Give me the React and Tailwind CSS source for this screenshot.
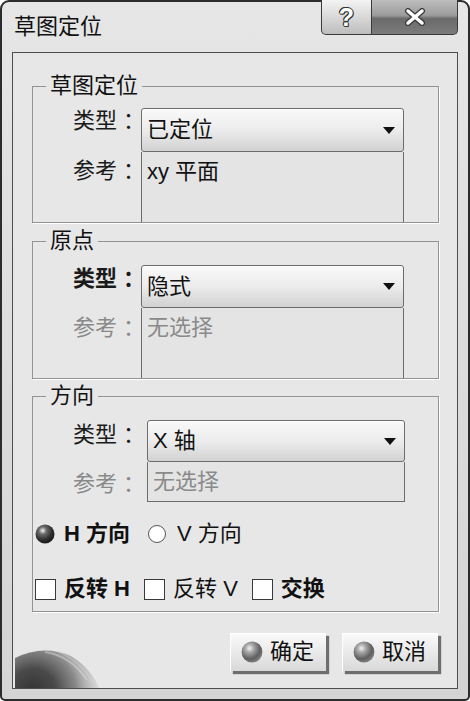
import React from 'react';

const FONT = "font-['Liberation_Sans','Noto_Sans_CJK_SC',sans-serif]";

function Sphere({ id, size = 22, dark = false }) {
  return (
    <svg width={size} height={size} viewBox="0 0 20 20" className="shrink-0">
      <defs>
        <radialGradient id={id} cx="38%" cy="32%" r="68%">
          <stop offset="0" stopColor="#f4f4f4" />
          <stop offset="0.3" stopColor={dark ? '#6a6a6a' : '#a8a8a8'} />
          <stop offset="0.75" stopColor={dark ? '#2a2a2a' : '#5e5e5e'} />
          <stop offset="1" stopColor={dark ? '#1a1a1a' : '#7c7c7c'} />
        </radialGradient>
      </defs>
      <circle cx="10" cy="10" r="9.5" fill={`url(#${id})`} />
    </svg>
  );
}

function Arrow() {
  return (
    <svg width="12" height="7" viewBox="0 0 12 7" className="shrink-0">
      <path d="M0 0h12L6 7z" fill="#111" />
    </svg>
  );
}

function Combo({ text }) {
  return (
    <div className="flex h-full items-center justify-between rounded-[3px] border border-[#6c6c6c] bg-gradient-to-b from-[#f9f9f9] via-[#ececec] to-[#d2d2d2] pl-[5px] pr-[8px] shadow-[inset_0_1px_0_#ffffff]">
      <span className="text-[22px] leading-[26px] text-[#111]">{text}</span>
      <Arrow />
    </div>
  );
}

function Group({ title, children, className = '' }) {
  return (
    <fieldset className={'border border-[#939393] shadow-[1px_1px_0_#ffffff] ' + className}>
      <legend className="ml-[13px] px-[4px] text-[22px] leading-[26px] text-[#111]">{title}</legend>
      {children}
    </fieldset>
  );
}

function Label({ text, disabled, className = '' }) {
  return (
    <div className={'shrink-0 whitespace-pre pl-[40px] text-[22px] leading-[26px] ' + (disabled ? 'text-[#8a8a8a] ' : 'text-[#1a1a1a] ') + className}>
      {text}
    </div>
  );
}

function Check({ label, bold }) {
  return (
    <div className="flex items-center gap-[8px]">
      <div className="h-[21px] w-[21px] border border-[#3a3a3a] bg-white" />
      <span className={'text-[22px] leading-[26px] text-[#111] ' + (bold ? 'font-bold' : '')}>{label}</span>
    </div>
  );
}

function DialogButton({ id, text }) {
  return (
    <div className="mr-[3px] flex h-[38px] w-[96px] items-center gap-[7px] bg-gradient-to-b from-[#fbfbfb] to-[#d9d9d9] pl-[11px] shadow-[3px_3px_1px_#6e6e6e,inset_1px_1px_0_#ffffff]">
      <Sphere id={id} size={22} />
      <span className="text-[22px] leading-[26px] text-[#111]">{text}</span>
    </div>
  );
}

export default function App() {
  return (
    <div className={'h-[701px] w-[470px] bg-white ' + FONT}>
      <div className="flex h-[701px] w-[470px] flex-col rounded-t-[9px] rounded-b-[5px] border-2 border-[#2c2c2c] bg-gradient-to-b from-[#e6e6e6] to-[#d4d4d4]">
        {/* title bar */}
        <div className="flex h-[50px] shrink-0 items-start justify-between pl-[12px] pr-[10px]">
          <div className="pt-[12px] text-[22px] leading-[26px] text-[#111]">草图定位</div>
          <div className="-mt-[2px] flex">
            <div className="flex h-[35px] w-[51px] items-center justify-center rounded-bl-[5px] border border-t-0 border-[#3a3a3a] bg-gradient-to-b from-[#f3f3f3] via-[#d9d9d9] to-[#bdbdbd]">
              <span className="text-[25px] font-bold leading-none text-white [text-shadow:-1px_0_#333,1px_0_#333,0_-1px_#333,0_1px_#333,1px_1px_#333,-1px_-1px_#333]">?</span>
            </div>
            <div className="flex h-[35px] w-[86px] items-center justify-center rounded-br-[5px] border border-l-0 border-t-0 border-[#3a3a3a] bg-[linear-gradient(to_bottom,#bdbdbd,#9c9c9c_45%,#6a6a6a_55%,#7c7c7c)]">
              <svg width="24" height="18" viewBox="0 0 24 18">
                <path d="M5 3l14 12M19 3L5 15" stroke="#3a3a3a" strokeWidth="6" strokeLinecap="round" />
                <path d="M5 3l14 12M19 3L5 15" stroke="#ffffff" strokeWidth="3.5" strokeLinecap="round" />
              </svg>
            </div>
          </div>
        </div>

        {/* client area */}
        <div className="mx-[10px] mb-[10px] flex flex-1 flex-col border border-[#4d4d4d] bg-[#e7e7e7]">
          <div className="flex flex-col pl-[19px] pr-[18px] pt-[20px]">
            <Group title="草图定位">
              <div className="flex flex-col pt-[9px] pr-[34px]">
                <div className="flex h-[44px]">
                  <Label text="类型 ：" className="w-[108px]" />
                  <div className="flex-1"><Combo text="已定位" /></div>
                </div>
                <div className="flex h-[70px]">
                  <Label text="参考 ：" className="w-[108px] pt-[6px]" />
                  <div className="flex-1 border border-t-0 border-b-0 border-[#6c6c6c] bg-[#e4e4e4] pl-[5px] pt-[7px] text-[22px] leading-[26px] text-[#111]">
                    xy 平面
                  </div>
                </div>
              </div>
            </Group>

            <Group title="原点" className="mt-[5px]">
              <div className="flex flex-col pt-[11px] pr-[34px]">
                <div className="flex h-[43px]">
                  <Label text="类型 ：" className="w-[108px] pt-[1px] font-semibold" />
                  <div className="flex-1"><Combo text="隐式" /></div>
                </div>
                <div className="flex h-[70px]">
                  <Label text="参考 ：" disabled className="w-[108px] pt-[7px]" />
                  <div className="flex-1 border border-t-0 border-b-0 border-[#6c6c6c] bg-[#e4e4e4] pl-[5px] pt-[7px] text-[22px] leading-[26px] text-[#8a8a8a]">
                    无选择
                  </div>
                </div>
              </div>
            </Group>

            <Group title="方向" className="mt-[4px]">
              <div className="flex flex-col pt-[11px] pb-[9px]">
                <div className="flex h-[42px] pr-[33px]">
                  <Label text="类型 ：" className="w-[114px] pt-[2px]" />
                  <div className="flex-1"><Combo text="X 轴" /></div>
                </div>
                <div className="flex h-[40px] pr-[33px]">
                  <Label text="参考 ：" disabled className="w-[114px] pt-[9px]" />
                  <div className="flex flex-1 items-center border border-t-0 border-[#6c6c6c] bg-[#e4e4e4] pl-[5px] text-[22px] leading-[26px] text-[#8a8a8a]">
                    无选择
                  </div>
                </div>
                <div className="mt-[19px] flex h-[26px] items-center pl-[2px]">
                  <Sphere id="radio-on" size={20} dark />
                  <span className="ml-[9px] text-[22px] font-bold leading-[26px] text-[#111]">H 方向</span>
                  <div className="ml-[18px] h-[18px] w-[18px] rounded-full border border-[#555555] bg-white" />
                  <span className="ml-[11px] text-[22px] leading-[26px] text-[#111]">V 方向</span>
                </div>
                <div className="mt-[29px] flex h-[26px] items-center gap-[14px] pl-[2px]">
                  <Check label="反转 H" bold />
                  <Check label="反转 V" />
                  <Check label="交换" bold />
                </div>
              </div>
            </Group>
          </div>

          {/* bottom row */}
          <div className="flex flex-1 items-end justify-between">
            <svg width="84" height="42" viewBox="0 0 84 42" className="ml-[2px] shrink-0">
              <defs>
                <radialGradient id="blob" gradientUnits="userSpaceOnUse" cx="18" cy="46" r="78">
                  <stop offset="0" stopColor="#333333" />
                  <stop offset="0.3" stopColor="#4a4a4a" />
                  <stop offset="0.55" stopColor="#777777" stopOpacity="0.85" />
                  <stop offset="0.8" stopColor="#b5b5b5" stopOpacity="0.45" />
                  <stop offset="1" stopColor="#e7e7e7" stopOpacity="0" />
                </radialGradient>
              </defs>
              <path d="M0 12 Q28 -2 56 10 Q76 22 84 42 L0 42 Z" fill="url(#blob)" />
              <path d="M30 6 Q56 10 72 34" stroke="#e0e0e0" strokeWidth="2" fill="none" opacity="0.45" />
              <path d="M42 5 Q64 14 79 38" stroke="#d8d8d8" strokeWidth="1.5" fill="none" opacity="0.35" />
            </svg>
            <div className="flex gap-[13px] pb-[17px] pr-[16px]">
              <DialogButton id="ok-ball" text="确定" />
              <DialogButton id="cancel-ball" text="取消" />
            </div>
          </div>
        </div>
      </div>
    </div>
  );
}
